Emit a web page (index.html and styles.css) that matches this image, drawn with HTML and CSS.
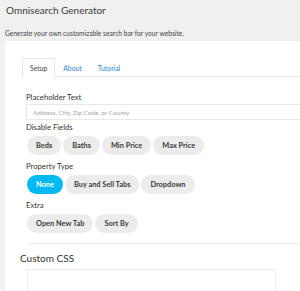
FILE: index.html
```html
<!DOCTYPE html>
<html lang="en">
<head>
  <meta charset="UTF-8" />
  <meta name="viewport" content="width=device-width, initial-scale=1.0"/>
  <title>Omnisearch Generator</title>
  <link rel="stylesheet" href="styles.css">
</head>
<body>

<div class="page">
  <h1 class="title">Omnisearch Generator</h1>
  <p class="intro">Generate your own customizable search bar for your website.</p>

  <div class="panel">
    <div class="tabs">
      <div class="tab active">Setup</div>
      <div class="tab">About</div>
      <div class="tab">Tutorial</div>
    </div>

    <div class="tab-body">
      <div class="field-label">Placeholder Text</div>
      <input class="text-input" type="text" placeholder="Address, City, Zip Code, or County" />

      <div class="field-label">Disable Fields</div>
      <div class="pills">
        <button class="pill">Beds</button>
        <button class="pill">Baths</button>
        <button class="pill">Min Price</button>
        <button class="pill">Max Price</button>
      </div>

      <div class="field-label">Property Type</div>
      <div class="pills">
        <button class="pill selected">None</button>
        <button class="pill">Buy and Sell Tabs</button>
        <button class="pill">Dropdown</button>
      </div>

      <div class="field-label">Extra</div>
      <div class="pills">
        <button class="pill">Open New Tab</button>
        <button class="pill">Sort By</button>
      </div>

      <div class="divider"></div>
    </div>

    <h2 class="section-title">Custom CSS</h2>
    <div class="css-box"></div>
  </div>
</div>

</body>
</html>
```

FILE: styles.css
```css
body {
  font-family: 'Lato', sans-serif;
  margin: 0;
  background: #f0f0f0;
  color: #333;
  overflow: hidden;
}

.page {
  padding-left: 5px;
  width: 300px;
}

.title {
  margin: 0;
  padding-left: 1px;
  font-size: 10px;
  line-height: 20px;
  font-weight: 400;
  color: #3a3a3a;
}

.intro {
  margin: 8px 0 3px;
  font-size: 6.7px;
  line-height: 10px;
  color: #444;
}

.panel {
  background: #fff;
  padding: 17px 0 0 10px;
  height: 233px;
}

.tabs {
  display: flex;
  margin-left: 7px;
  border-bottom: 1px solid #e8e8e8;
}

.tab {
  height: 18px;
  padding: 0 7px;
  font-size: 6.8px;
  line-height: 19px;
  color: #2d86c4;
  border: 1px solid transparent;
  border-bottom: none;
  margin-bottom: -1px;
}

.tab.active {
  color: #444;
  background: #fff;
  border-color: #e8e8e8;
  border-radius: 2px 2px 0 0;
}

.tab-body {
  padding: 14px 0 0 11px;
}

.field-label {
  font-size: 7.7px;
  line-height: 12px;
  color: #333;
}

.text-input {
  display: block;
  box-sizing: border-box;
  width: 300px;
  height: 16px;
  margin: 1px 0 1px;
  padding: 0 6px;
  border: 1px solid #e8e8e8;
  font-family: 'Lato', sans-serif;
  font-size: 6.4px;
  color: #333;
  outline: none;
}

.text-input::placeholder {
  color: #a6a6a6;
}

.pills {
  display: flex;
  gap: 2px;
  margin: 3px 0 5px 1px;
}

.pill {
  height: 19px;
  padding: 0 9px;
  border: none;
  border-radius: 10px;
  background: #ececec;
  font-family: 'Lato', sans-serif;
  font-size: 7.4px;
  font-weight: 700;
  color: #3a3a3a;
}

.pill.selected {
  background: #00b9f1;
  color: #fff;
}

.divider {
  margin: 10px 0 0 1px;
  border-top: 1px solid #efefef;
}

.section-title {
  margin: 7px 0 0;
  padding-left: 5px;
  font-size: 10px;
  line-height: 14px;
  font-weight: 400;
  color: #333;
}

.css-box {
  width: 247px;
  height: 40px;
  margin: 4px 0 0 12px;
  border: 1px solid #ececec;
}
```
